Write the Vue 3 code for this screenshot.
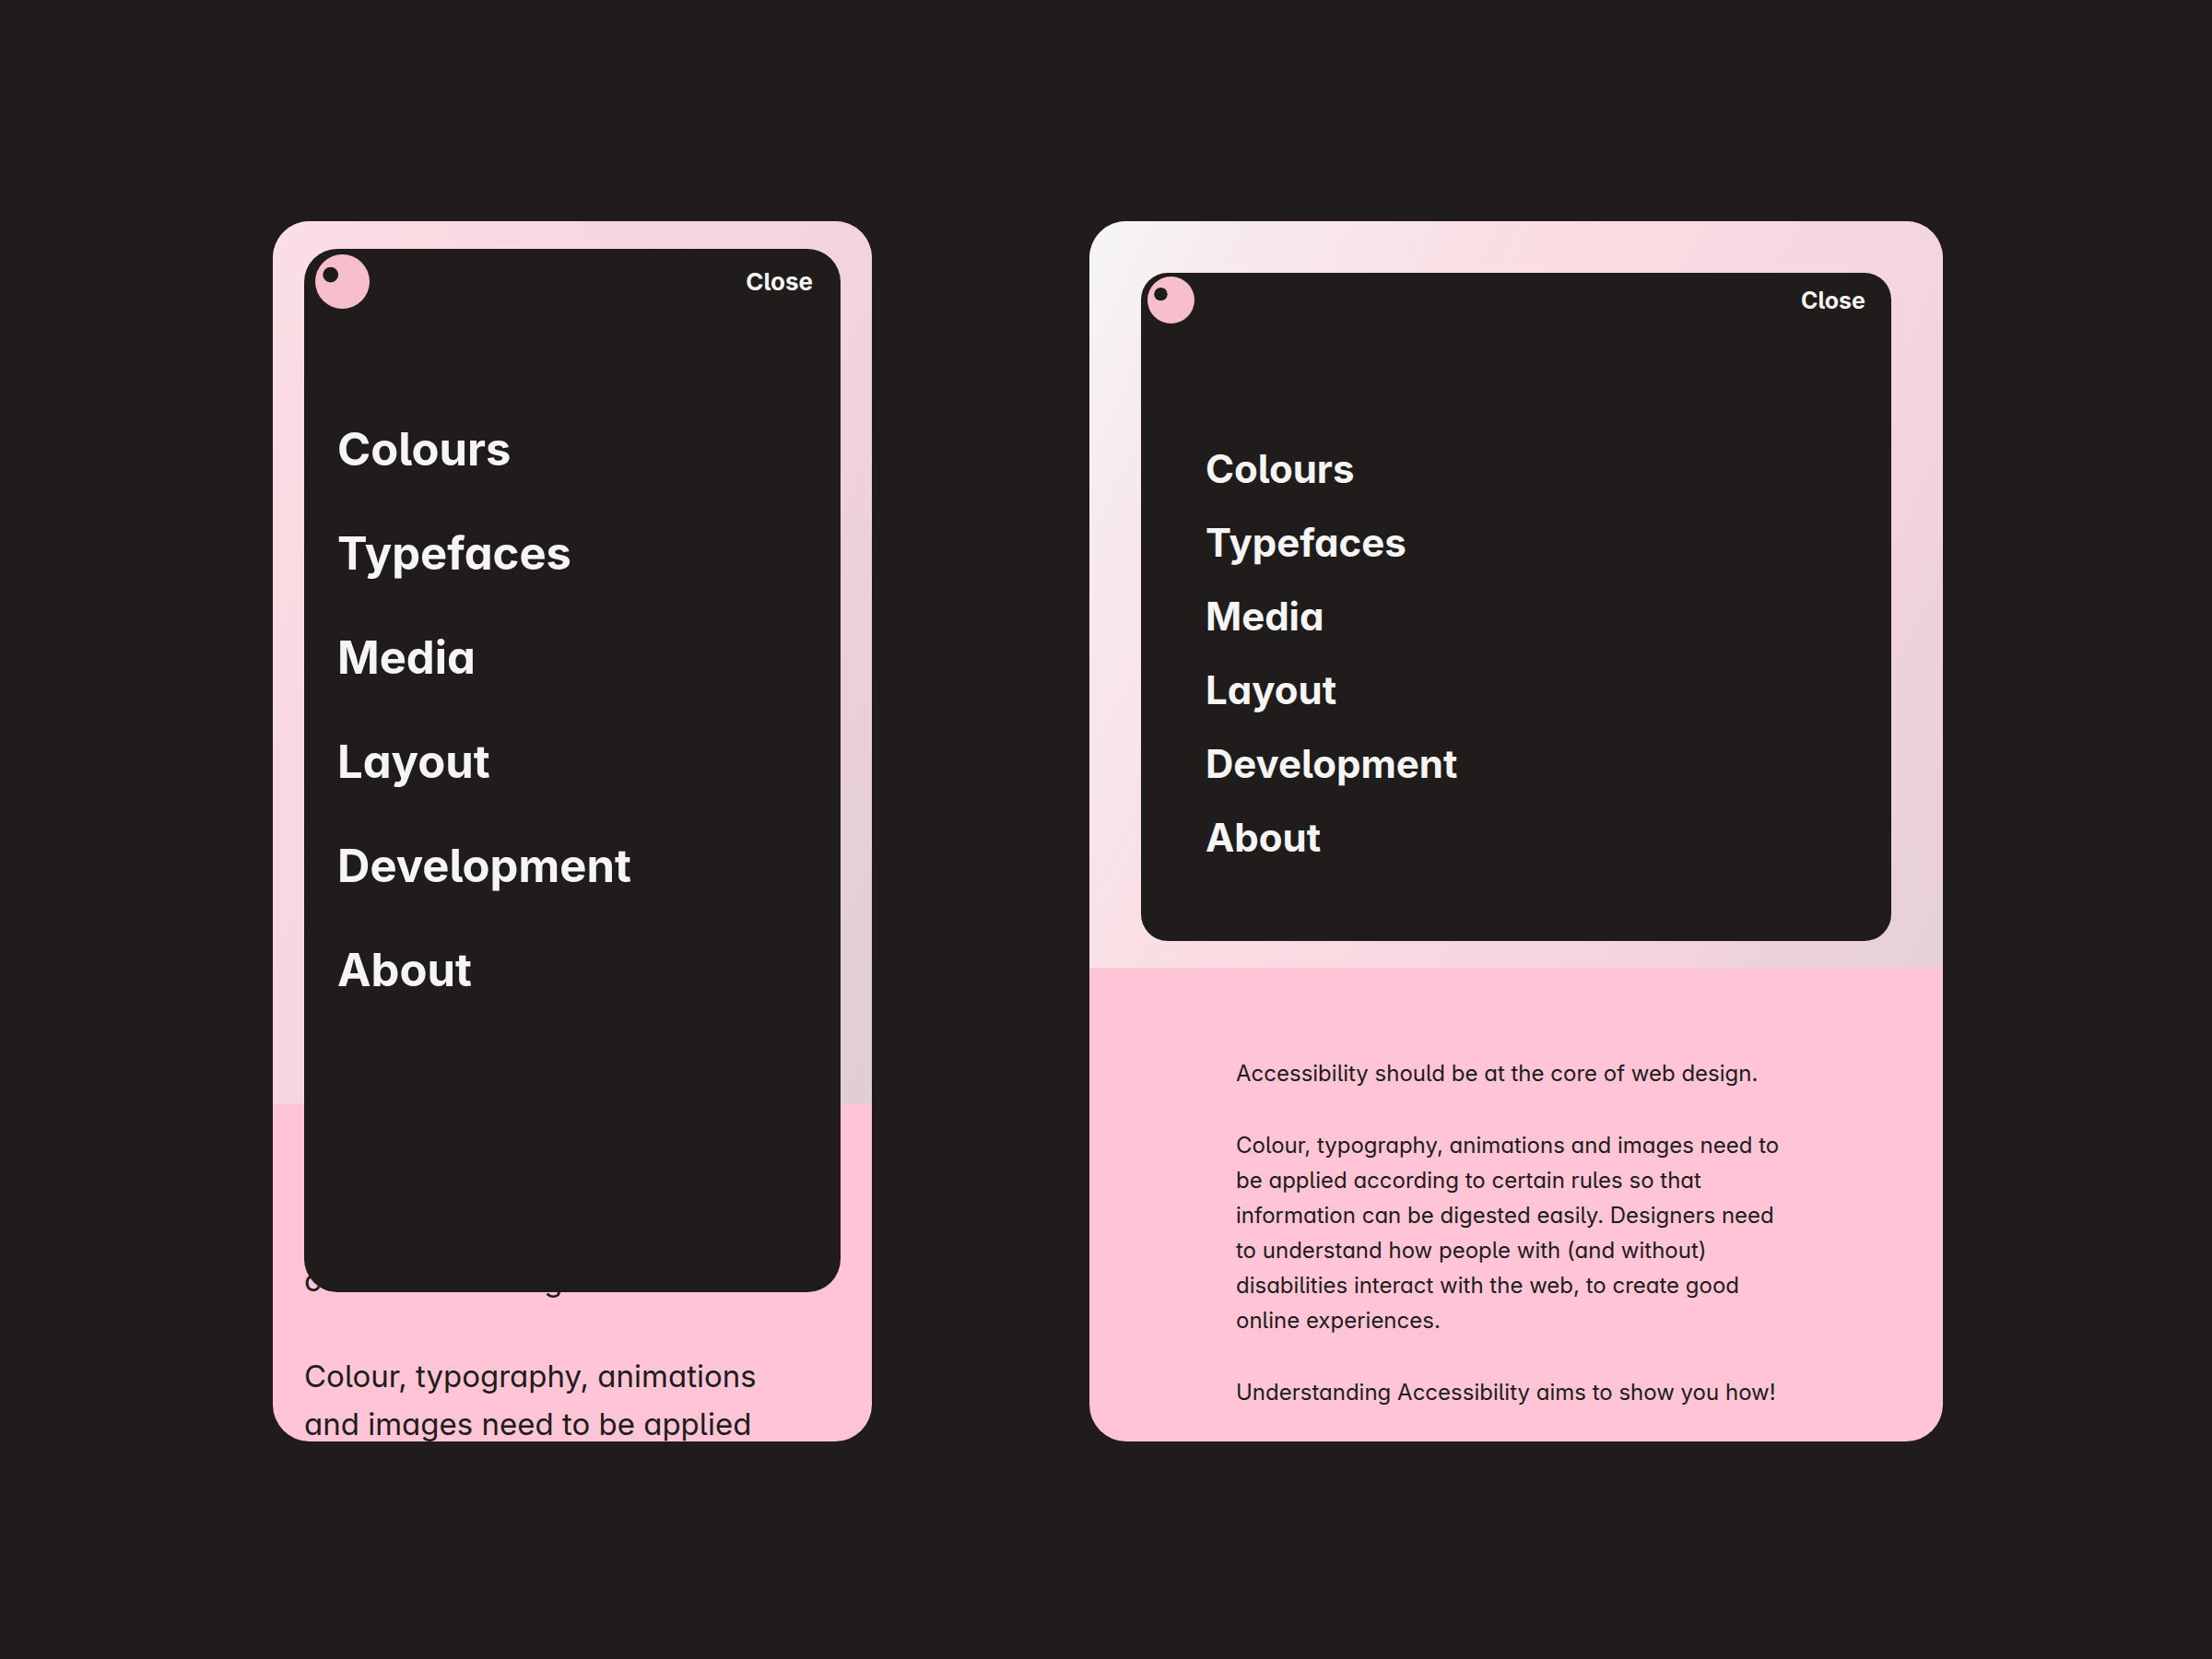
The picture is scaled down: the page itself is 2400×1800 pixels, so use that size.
<script setup>
const links = ['Colours', 'Typefaces', 'Media', 'Layout', 'Development', 'About']

const screens = [
  {
    name: 'mobile',
    copy: [
      'Accessibility should be at the core of web design.',
      'Colour, typography, animations and images need to be applied'
    ]
  },
  {
    name: 'tablet',
    copy: [
      'Accessibility should be at the core of web design.',
      'Colour, typography, animations and images need to be applied according to certain rules so that information can be digested easily. Designers need to understand how people with (and without) disabilities interact with the web, to create good online experiences.',
      'Understanding Accessibility aims to show you how!'
    ]
  }
]
</script>

<template>
  <main class="showcase">
    <section v-for="screen in screens" :key="screen.name" class="screen" :class="screen.name">
      <div class="hero">
        <div class="menu">
          <header class="bar">
            <svg class="logo" viewBox="0 0 60 60" aria-hidden="true">
              <circle cx="30" cy="30" r="30" fill="#f7bfcc" />
              <circle cx="17" cy="22.5" r="8.5" fill="#201c1b" />
            </svg>
            <button type="button" class="close">Close</button>
          </header>
          <nav class="links">
            <a v-for="link in links" :key="link" :href="'#' + link.toLowerCase()">{{ link }}</a>
          </nav>
        </div>
      </div>
      <div class="copy">
        <p v-for="paragraph in screen.copy" :key="paragraph">{{ paragraph }}</p>
      </div>
    </section>
  </main>
</template>

<style>
body {
  background: #201c1b;
}
</style>

<style scoped>
.showcase {
  box-sizing: border-box;
  min-height: 100vh;
  padding: 240px 292px 236px 296px;
  display: grid;
  grid-template-columns: minmax(0, 650fr) minmax(0, 926fr);
  align-items: stretch;
  gap: 236px;
  background: #201c1b;
  color: #201c1b;
  font-family: Inter, "Liberation Sans", sans-serif;
  font-feature-settings: "cv11", "cv05";
}

.screen {
  position: relative;
  border-radius: 40px;
  overflow: hidden;
  background: #ffc5d6;
}

.menu {
  background: #201c1b;
  color: #f6f5f5;
}

.bar {
  display: flex;
  align-items: center;
  justify-content: space-between;
}

.logo {
  display: block;
}

.close {
  padding: 0;
  border: 0;
  background: none;
  color: inherit;
  font: inherit;
  font-weight: 700;
  font-size: 26px;
  line-height: 32px;
  cursor: pointer;
}

.links {
  display: flex;
  flex-direction: column;
  align-items: flex-start;
}

.links a {
  color: inherit;
  font-weight: 700;
  text-decoration: none;
}

.copy {
  display: flex;
  flex-direction: column;
}

.copy p {
  margin: 0;
}

/* Mobile: the menu floats over both the hero and the copy */
.mobile {
  contain: size;
}

.mobile .hero {
  height: 958px;
  background: linear-gradient(113deg, #fbdfe6 0%, #fbdae2 15%, #f6d6e1 42%, #f4d5df 58%, #edd1d9 75%, #e0ced4 100%);
}

.mobile .menu {
  position: absolute;
  inset: 30px 34px auto;
  border-radius: 36px;
}

.mobile .bar {
  padding: 6px 30px 0 12px;
}

.mobile .logo {
  width: 59px;
  height: 59px;
}

.mobile .links {
  padding: 96px 36px 293px;
  font-size: 49px;
  line-height: 113px;
}

.mobile .copy {
  padding: 113px 86px 0 34px;
  gap: 52px;
  font-size: 33px;
  line-height: 52px;
}

/* Tablet: the menu sits inside the hero */
.tablet .hero {
  padding: 56px 56px 29px;
  background: linear-gradient(116deg, #f6f6f6 0%, #f7eaee 13%, #f8e3e9 26%, #f9e0e5 32%, #fbdae2 48%, #f8d7e1 60%, #f5d5e0 71%, #edd2d9 87%, #e6d1d8 100%);
}

.tablet .menu {
  border-radius: 29px;
}

.tablet .bar {
  padding: 4px 28px 0 7px;
}

.tablet .logo {
  width: 51px;
  height: 51px;
}

.tablet .close {
  font-size: 25px;
}

.tablet .links {
  padding: 118px 70px 72px;
  font-size: 42px;
  line-height: 80px;
}

.tablet .copy {
  padding: 96px 159px 33px;
  gap: 40px;
  font-size: 24px;
  line-height: 38px;
}
</style>
